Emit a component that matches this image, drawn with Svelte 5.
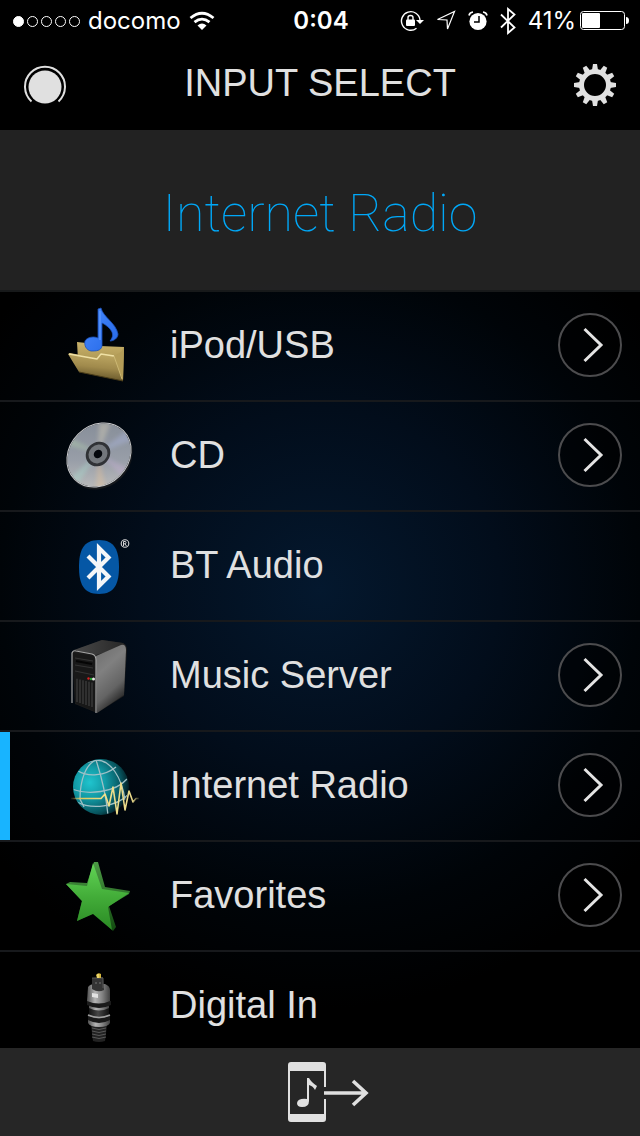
<script>
  const sources = [
    { id: "usb", name: "iPod/USB", more: true },
    { id: "cd", name: "CD", more: true },
    { id: "bt", name: "BT Audio", more: false },
    { id: "server", name: "Music Server", more: true },
    { id: "radio", name: "Internet Radio", more: true },
    { id: "favorites", name: "Favorites", more: true },
    { id: "digital", name: "Digital In", more: false },
  ];

  let selected = $state("radio");
  let current = $derived(sources.find((s) => s.id === selected));

  const signal = [1, 0, 0, 0, 0];
  const teeth = [0, 30, 60, 90, 120, 150, 180, 210, 240, 270, 300, 330];
  const slots = [27, 30, 33, 36, 39, 42];
  const ridges = [73, 76, 79, 82];
</script>

<!-- Source artwork, 100 x 100 each -->
{#snippet usb()}
  <svg class="art" viewBox="0 -5 100 100" aria-hidden="true">
    <defs>
      <linearGradient id="folderBack" x1="0" y1="0" x2="0" y2="1">
        <stop offset="0" stop-color="#c9b26a" />
        <stop offset="1" stop-color="#8f7a3c" />
      </linearGradient>
      <linearGradient id="folderFront" x1="0.6" y1="0" x2="0.4" y2="1">
        <stop offset="0" stop-color="#bfa964" />
        <stop offset="0.5" stop-color="#a08a4c" />
        <stop offset="1" stop-color="#5d4e25" />
      </linearGradient>
      <linearGradient id="noteBlue" x1="0" y1="0" x2="1" y2="1">
        <stop offset="0" stop-color="#4a8cff" />
        <stop offset="1" stop-color="#2366e6" />
      </linearGradient>
    </defs>
    <path d="M27 42 L46 44 L50 46 L74 47 L73 81 L28 60 Z" fill="url(#folderBack)" />
    <path d="M74 47 L73 81 L70 74 L64 56 L71 52 Z" fill="#b49d58" />
    <path d="M48 9 L51 8 C53 17 66 23 68 34 C68 38 64 41 60 41 C67 33 58 26 52 23 L52 46 C51 51 46 51 41 51 C36 50 34 45 35 41 C37 37 44 36 48 38 Z" fill="url(#noteBlue)" stroke="#1c50b8" stroke-width="0.8" />
    <path d="M50 11 L50 40" stroke="#6ba2ff" stroke-width="1" />
    <path d="M18 54 L20 53 L46 58 L50 54 L64 55 L73 81 L29 72 Z" fill="url(#folderFront)" />
    <path d="M19 54 L47 59 L51 54 L64 56" fill="none" stroke="#efe0a4" stroke-width="1.4" stroke-linejoin="round" />
    <path d="M64 56 L72 79" stroke="#cdb974" stroke-width="1" />
    <path d="M29 72 L73 81" stroke="#483b18" stroke-width="1" />
  </svg>
{/snippet}

{#snippet cd()}
  <svg class="art" viewBox="0 -5 100 100" aria-hidden="true">
    <defs>
      <linearGradient id="discTone" x1="0" y1="0" x2="0" y2="1">
        <stop offset="0" stop-color="#868d98" />
        <stop offset="0.5" stop-color="#989ea8" />
        <stop offset="1" stop-color="#c8c6c2" />
      </linearGradient>
      <filter id="soften" x="-20%" y="-20%" width="140%" height="140%">
        <feGaussianBlur stdDeviation="2" />
      </filter>
      <clipPath id="discClip">
        <ellipse cx="49" cy="45" rx="34" ry="29" transform="rotate(-45 49 45)" />
      </clipPath>
    </defs>
    <ellipse cx="50" cy="47" rx="35" ry="30" fill="#15181c" transform="rotate(-45 50 47)" />
    <g clip-path="url(#discClip)">
      <rect x="10" y="10" width="80" height="80" fill="url(#discTone)" />
      <g opacity="0.28" filter="url(#soften)">
        <path d="M48 43 L49 13 L61 13 Z" fill="#fff0c8" />
        <path d="M48 43 L46 80 L56 79 Z" fill="#ffc98c" />
        <path d="M48 43 L20 68 L28 74 Z" fill="#a8f0dc" />
        <path d="M48 43 L77 20 L83 30 Z" fill="#b9c8ff" />
        <path d="M48 43 L73 67 L79 59 Z" fill="#d8b4e8" />
        <path d="M48 43 L17 35 L21 28 Z" fill="#c4f0b4" />
      </g>
    </g>
    <ellipse cx="49" cy="45" rx="34.5" ry="29.5" fill="none" stroke="#c9cacc" stroke-width="1" transform="rotate(-45 49 45)" />
    <g transform="rotate(-45 48 44)">
      <ellipse cx="48" cy="44" rx="13" ry="11.5" fill="#303236" />
      <ellipse cx="48" cy="44" rx="10" ry="9" fill="#73777c" />
      <ellipse cx="48" cy="44" rx="4.5" ry="4" fill="#05080d" />
    </g>
  </svg>
{/snippet}

{#snippet bt()}
  <svg class="art" viewBox="0 -5 100 100" aria-hidden="true">
    <path d="M49 20 C65 20 69 31 69 47 C69 63 65 74 49 74 C33 74 29 63 29 47 C29 31 33 20 49 20 Z" fill="#0557a5" />
    <path d="M38 36 L58.5 56.5 L49 66 L49 28 L58.5 37.5 L38 58" fill="none" stroke="#f4f6f8" stroke-width="4.2" />
    <circle cx="75" cy="23.5" r="3.8" fill="none" stroke="#d8d8d8" stroke-width="1.1" />
    <path d="M73.5 26 V21.5 H75.5 Q76.5 22.5 75.5 23.8 H73.5 M75 24 L76.5 26" fill="none" stroke="#d8d8d8" stroke-width="1" />
  </svg>
{/snippet}

{#snippet server()}
  <svg class="art" viewBox="0 -5 100 100" aria-hidden="true">
    <defs>
      <linearGradient id="caseSide" x1="0" y1="0" x2="0.4" y2="1">
        <stop offset="0" stop-color="#6c6c6c" />
        <stop offset="0.4" stop-color="#808080" />
        <stop offset="0.75" stop-color="#646464" />
        <stop offset="1" stop-color="#242424" />
      </linearGradient>
      <linearGradient id="caseTop" x1="0" y1="0" x2="1" y2="0">
        <stop offset="0" stop-color="#484848" />
        <stop offset="1" stop-color="#262626" />
      </linearGradient>
    </defs>
    <path d="M22 23 L25 20 L52 10 L73 13 Q77 15 77 20 L74 66 L47 83 L25 74 Z" fill="#1d1d1d" />
    <path d="M24 20 L52 10 L73 13 L76 16 L46 25 Z" fill="url(#caseTop)" />
    <path d="M46 26 L71 15 Q76 14 76 20 L74 65 L47 83 Z" fill="url(#caseSide)" />
    <path d="M23 23 L44 26 L46 82 L25 73 Z" fill="#181818" />
    <path d="M25 28 L43 31 M25 35 L43 38 M25 41 L44 45" stroke="#343434" stroke-width="1" />
    <path d="M26 31 L42 34" stroke="#050505" stroke-width="2" />
    {#each slots as x}
      <path d="M{x} {x / 4 + 42} V{x / 3 + 63}" stroke="#464646" stroke-width="1" />
    {/each}
    <path d="M22 73 L22 23 Q23 20 26 21 L42 24 Q46 25 46 30 L46 83" fill="none" stroke="#a4a4a4" stroke-width="1.2" />
    <circle cx="38.5" cy="48.5" r="1.2" fill="#d82020" />
    <circle cx="41" cy="49" r="1.2" fill="#28a532" />
    <circle cx="43.5" cy="49" r="1.5" fill="#e6e6e6" />
  </svg>
{/snippet}

{#snippet radio()}
  <svg class="art" viewBox="0 -5 100 100" aria-hidden="true">
    <defs>
      <radialGradient id="globe" cx="0.3" cy="0.42" r="0.7">
        <stop offset="0" stop-color="#20c4ce" />
        <stop offset="0.4" stop-color="#129aa5" />
        <stop offset="0.8" stop-color="#07545e" />
        <stop offset="1" stop-color="#021d24" />
      </radialGradient>
      <linearGradient id="wave" x1="21" y1="0" x2="89" y2="0" gradientUnits="userSpaceOnUse">
        <stop offset="0" stop-color="#d8c060" stop-opacity="0.1" />
        <stop offset="0.15" stop-color="#e0c85c" />
        <stop offset="0.5" stop-color="#f0e08a" />
        <stop offset="0.9" stop-color="#e8d88a" />
        <stop offset="1" stop-color="#e8d88a" stop-opacity="0.1" />
      </linearGradient>
      <clipPath id="globeClip"><circle cx="51" cy="47" r="27.5" /></clipPath>
    </defs>
    <circle cx="51" cy="47" r="28" fill="url(#globe)" />
    <g clip-path="url(#globeClip)" fill="none" stroke="#9fc0c6" stroke-width="1.3">
      <path d="M46 20 C36 24 30 40 30 59 L34 67" />
      <path d="M46 20 C50 32 56 56 58 75" />
      <path d="M46 20 C61 20 72 38 75 60" />
      <path d="M46 20 C37 22 31 24 27 30" />
      <path d="M28 31 C38 37 55 36 66 27" />
      <path d="M22 49 C37 55 65 53 77 39" />
      <path d="M27 62 C42 70 66 67 79 54" />
    </g>
    <path d="M21 58.5 H51 L55 54 L59 66 L63 47 L67 74 L71 43 L75 70 L79 51 L83 62 L86 58.5 H89" fill="none" stroke="url(#wave)" stroke-width="1.6" stroke-linejoin="round" />
  </svg>
{/snippet}

{#snippet favorites()}
  <svg class="art" viewBox="0 -5 100 100" aria-hidden="true">
    <defs>
      <linearGradient id="starFace" x1="0" y1="0" x2="0" y2="1">
        <stop offset="0" stop-color="#62d456" />
        <stop offset="0.5" stop-color="#43ad39" />
        <stop offset="1" stop-color="#2a8a24" />
      </linearGradient>
      <linearGradient id="starEdge" x1="0" y1="0" x2="0" y2="1">
        <stop offset="0" stop-color="#4c9a45" />
        <stop offset="1" stop-color="#124b10" />
      </linearGradient>
    </defs>
    <path d="M44 12 L48 12 L55 37 L80 41 L79 44 L59 56 L66 77 L63 81 L44 63 L31 69 L27 71 L32 51 L16 34 L20 32 L37 33 Z" fill="url(#starEdge)" />
    <path d="M43 13 L52 39 L79 43 L58 57 L62 80 L43 64 L27 71 L32 51 L16 34 L37 36 Z" fill="url(#starFace)" />
  </svg>
{/snippet}

{#snippet digital()}
  <svg class="art" viewBox="0 0 100 100" aria-hidden="true">
    <defs>
      <linearGradient id="metal" x1="0" y1="0" x2="1" y2="0">
        <stop offset="0" stop-color="#505050" />
        <stop offset="0.35" stop-color="#b4b4b4" />
        <stop offset="0.65" stop-color="#858585" />
        <stop offset="1" stop-color="#404040" />
      </linearGradient>
      <linearGradient id="rubber" x1="0" y1="0" x2="1" y2="0">
        <stop offset="0" stop-color="#141414" />
        <stop offset="0.45" stop-color="#464646" />
        <stop offset="1" stop-color="#101010" />
      </linearGradient>
    </defs>
    <path d="M41 70 L57 70 L55 86 Q49 88 43 86 Z" fill="#222222" />
    {#each ridges as y}
      <path d="M42 {y} Q49 {y + 3} 56 {y}" fill="none" stroke="#585858" stroke-width="1" />
    {/each}
    <path d="M38 61 Q49 65 60 61 V68 Q58 72 49 72 Q40 72 38 68 Z" fill="url(#metal)" />
    <path d="M39 51 L59 51 V65 Q49 69 39 65 Z" fill="url(#rubber)" />
    <path d="M38 61 Q49 66 60 61 V65 Q49 71 38 65 Z" fill="#191919" />
    <path d="M38 60 Q49 65 60 60" fill="none" stroke="#a0a0a0" stroke-width="1.4" />
    <path d="M39 50 Q49 55 59 50 V53 Q49 58 39 53 Z" fill="url(#metal)" />
    <path d="M37 46 H61 V50 Q49 56 37 50 Z" fill="#1b1b1b" />
    <path d="M38 32 Q40 29 45 29 H55 Q60 31 60 35 V46 Q49 51 37 46 Z" fill="url(#metal)" />
    <path d="M42 38 L48 39 V43 L42 42 Z" fill="#e2e2e2" />
    <path d="M42 23 L53 22 L54 35 Q48 38 42 34 Z" fill="#343434" />
    <path d="M42 23 L53 23 V33" fill="none" stroke="#606060" stroke-width="0.8" />
    <path d="M45 28 H47 M49 28 H51" stroke="#777777" stroke-width="1" />
    <path d="M46 20 Q48 17 51 19 V23 H47 Z" fill="#d6b83e" />
    <path d="M48 19 V23" stroke="#fff09a" stroke-width="1" />
  </svg>
{/snippet}

<div class="app">
  <div class="status">
    <div class="carrier">
      <div class="signal">
        {#each signal as on}
          <span class="dot" class:on={on === 1}></span>
        {/each}
      </div>
      <span>docomo</span>
      <svg width="26" height="20" viewBox="0 0 26 20" aria-hidden="true">
        <g fill="none" stroke="#fff" stroke-width="2.8">
          <path d="M1.5 7 Q13 -2.5 24.5 7" />
          <path d="M5.5 11.2 Q13 5 20.5 11.2" />
        </g>
        <path d="M8.5 14.5 Q13 10.5 17.5 14.5 L13 19 Z" fill="#fff" />
      </svg>
    </div>
    <span class="time">0:04</span>
    <div class="indicators">
      <svg width="24" height="22" viewBox="0 0 24 22" aria-hidden="true">
        <path d="M20 10 A9.3 9.3 0 1 0 16.5 18.3" fill="none" stroke="#fff" stroke-width="1.4" />
        <path d="M16 10 H24 L20 14 Z" fill="#fff" />
        <rect x="6" y="9.5" width="9" height="6.5" rx="1" fill="#fff" />
        <path d="M8 10 V7.5 Q8 5.5 10.5 5.5 Q13 5.5 13 7.5 V10" fill="none" stroke="#fff" stroke-width="1.4" />
      </svg>
      <svg width="20" height="22" viewBox="0 0 20 22" aria-hidden="true">
        <path d="M1.5 9.5 L18.5 1.5 L11.5 19 L11 10 Z" fill="none" stroke="#fff" stroke-width="1.2" />
      </svg>
      <svg width="20" height="22" viewBox="0 0 20 22" aria-hidden="true">
        <circle cx="10" cy="11.5" r="8.6" fill="#fff" />
        <path d="M11 6 V12 H6" fill="none" stroke="#000" stroke-width="1.5" />
        <path d="M1 5.5 Q1.5 2.5 5 2 M19 5.5 Q18.5 2.5 15 2" fill="none" stroke="#fff" stroke-width="1.6" />
      </svg>
      <svg width="16" height="28" viewBox="0 0 16 28" aria-hidden="true">
        <path d="M1 7.5 L14.5 20.5 L8 26 V2 L14.5 7.5 L1 20.5" fill="none" stroke="#fff" stroke-width="1.8" />
      </svg>
      <div class="power">
        <span>41%</span>
        <svg width="49" height="20" viewBox="0 0 49 20" aria-hidden="true">
          <rect x="0.5" y="0.5" width="44" height="18" rx="3" fill="none" stroke="#fff" />
          <rect x="2" y="2" width="18" height="15" rx="1" fill="#fff" />
          <path d="M46 6 Q49 6 49 9.5 Q49 13 46 13 Z" fill="#fff" />
        </svg>
      </div>
    </div>
  </div>

  <header>
    <button aria-label="Home">
      <svg width="42" height="42" viewBox="0 0 42 42">
        <circle cx="21" cy="23" r="16.5" fill="#e0e0e0" />
        <path d="M7.5 37.5 A20 20 0 1 1 34.5 37.5" fill="none" stroke="#e0e0e0" stroke-width="2" />
      </svg>
    </button>
    <h1>INPUT SELECT</h1>
    <button class="end" aria-label="Settings">
      <svg width="42" height="42" viewBox="0 0 42 42">
        <circle cx="21" cy="21" r="13.5" fill="none" stroke="#e0e0e0" stroke-width="5" />
        {#each teeth as angle}
          <path d="M18 6 L19 0 H23 L24 6 Z" fill="#e0e0e0" transform="rotate({angle} 21 21)" />
        {/each}
      </svg>
    </button>
  </header>

  <main>
    <h2>{current.name}</h2>
    <ul>
      {#each sources as source}
        <li class:active={source.id === selected}>
          <button class="source" onclick={() => (selected = source.id)}>
            {#if source.id === "usb"}
              {@render usb()}
            {:else if source.id === "cd"}
              {@render cd()}
            {:else if source.id === "bt"}
              {@render bt()}
            {:else if source.id === "server"}
              {@render server()}
            {:else if source.id === "radio"}
              {@render radio()}
            {:else if source.id === "favorites"}
              {@render favorites()}
            {:else}
              {@render digital()}
            {/if}
            <span>{source.name}</span>
          </button>
          {#if source.more}
            <button aria-label="Open {source.name}">
              <svg width="64" height="64" viewBox="0 0 64 64">
                <circle cx="32" cy="32" r="31" fill="#000" fill-opacity="0.4" stroke="#4c4c4e" stroke-width="2" />
                <path d="M26.5 16 L43 32 L26.5 48" fill="none" stroke="#e4e4e4" stroke-width="3" />
              </svg>
            </button>
          {/if}
        </li>
      {/each}
    </ul>
  </main>

  <footer>
    <button aria-label="Play music from this phone">
      <svg width="82" height="60" viewBox="0 0 82 60">
        <path d="M3 0 H35 Q38 0 38 3 V25 H36 V9 H2 V52 H36 V37 H38 V57 Q38 60 35 60 H3 Q0 60 0 57 V3 Q0 0 3 0 Z" fill="#e0e0e0" fill-rule="evenodd" />
        <path d="M19 16 H21 Q23 20 29 24 L27 28 Q25 24 21 23 V39 Q21 45 14 45 Q9 45 9 41 Q10 36 19 37 Z" fill="#e0e0e0" />
        <path d="M36 31 H78 M65 19 L78 31 L65 43" fill="none" stroke="#e0e0e0" stroke-width="3.6" />
      </svg>
    </button>
  </footer>
</div>

<style>
  :global(body) {
    margin: 0;
    background: #000;
  }
  .app {
    display: flex;
    flex-direction: column;
    height: 100vh;
    overflow: hidden;
    color: #e0e0e0;
    font-family: "Liberation Sans", Arial, sans-serif;
  }
  svg {
    display: block;
    flex: none;
  }
  button {
    padding: 0;
    border: none;
    background: none;
    color: inherit;
    font: inherit;
    cursor: pointer;
  }

  /* Status bar */
  .status {
    display: grid;
    grid-template-columns: 1fr auto 1fr;
    align-items: center;
    height: 40px;
    padding: 0 11px 0 13px;
    color: #fff;
    font-family: Inter, sans-serif;
    font-size: 24px;
    line-height: 42px;
  }
  .carrier,
  .signal,
  .indicators,
  .power {
    display: flex;
    align-items: center;
  }
  .carrier {
    gap: 8px;
  }
  .signal {
    gap: 3px;
  }
  .dot {
    box-sizing: border-box;
    width: 11px;
    height: 11px;
    border: 1px solid #fff;
    border-radius: 50%;
  }
  .dot.on {
    background: #fff;
  }
  .time {
    font-weight: 600;
  }
  .indicators {
    justify-content: flex-end;
    gap: 12px;
  }
  .power {
    gap: 4px;
  }

  /* Title bar */
  header {
    display: grid;
    grid-template-columns: 1fr auto 1fr;
    align-items: center;
    height: 90px;
    padding: 0 24px;
  }
  h1 {
    margin: 0;
    padding-bottom: 4px;
    font-size: 38px;
    font-weight: 400;
    line-height: 44px;
  }
  .end {
    justify-self: end;
  }

  main {
    display: flex;
    flex: 1;
    flex-direction: column;
    min-height: 0;
    background: radial-gradient(circle at 50% 50%, #04182e 0, #020d1b 180px, #000408 320px, #000 420px);
  }
  h2 {
    flex: none;
    height: 160px;
    margin: 0;
    border-bottom: 2px solid #17191a;
    background: rgba(38, 38, 38, 0.9);
    color: #00a8f8;
    font-family: Roboto, sans-serif;
    font-size: 52px;
    font-weight: 100;
    line-height: 168px;
    text-align: center;
  }

  /* Source list */
  ul {
    flex: 1;
    min-height: 0;
    margin: 0;
    padding: 0;
    overflow: hidden;
    list-style: none;
  }
  li {
    display: flex;
    align-items: center;
    height: 106px;
    padding: 0 18px 2px 0;
    border-bottom: 2px solid #17191c;
  }
  li.active {
    box-shadow: inset 10px 0 #18b4ff;
  }
  .source {
    display: flex;
    flex: 1;
    align-items: center;
    gap: 20px;
    padding-left: 50px;
    font-size: 38px;
    line-height: 44px;
    text-align: left;
  }
  .art {
    width: 100px;
    height: 100px;
  }

  footer {
    display: flex;
    flex: none;
    align-items: center;
    justify-content: center;
    height: 88px;
    padding-left: 18px;
    background: #262626;
  }
</style>
